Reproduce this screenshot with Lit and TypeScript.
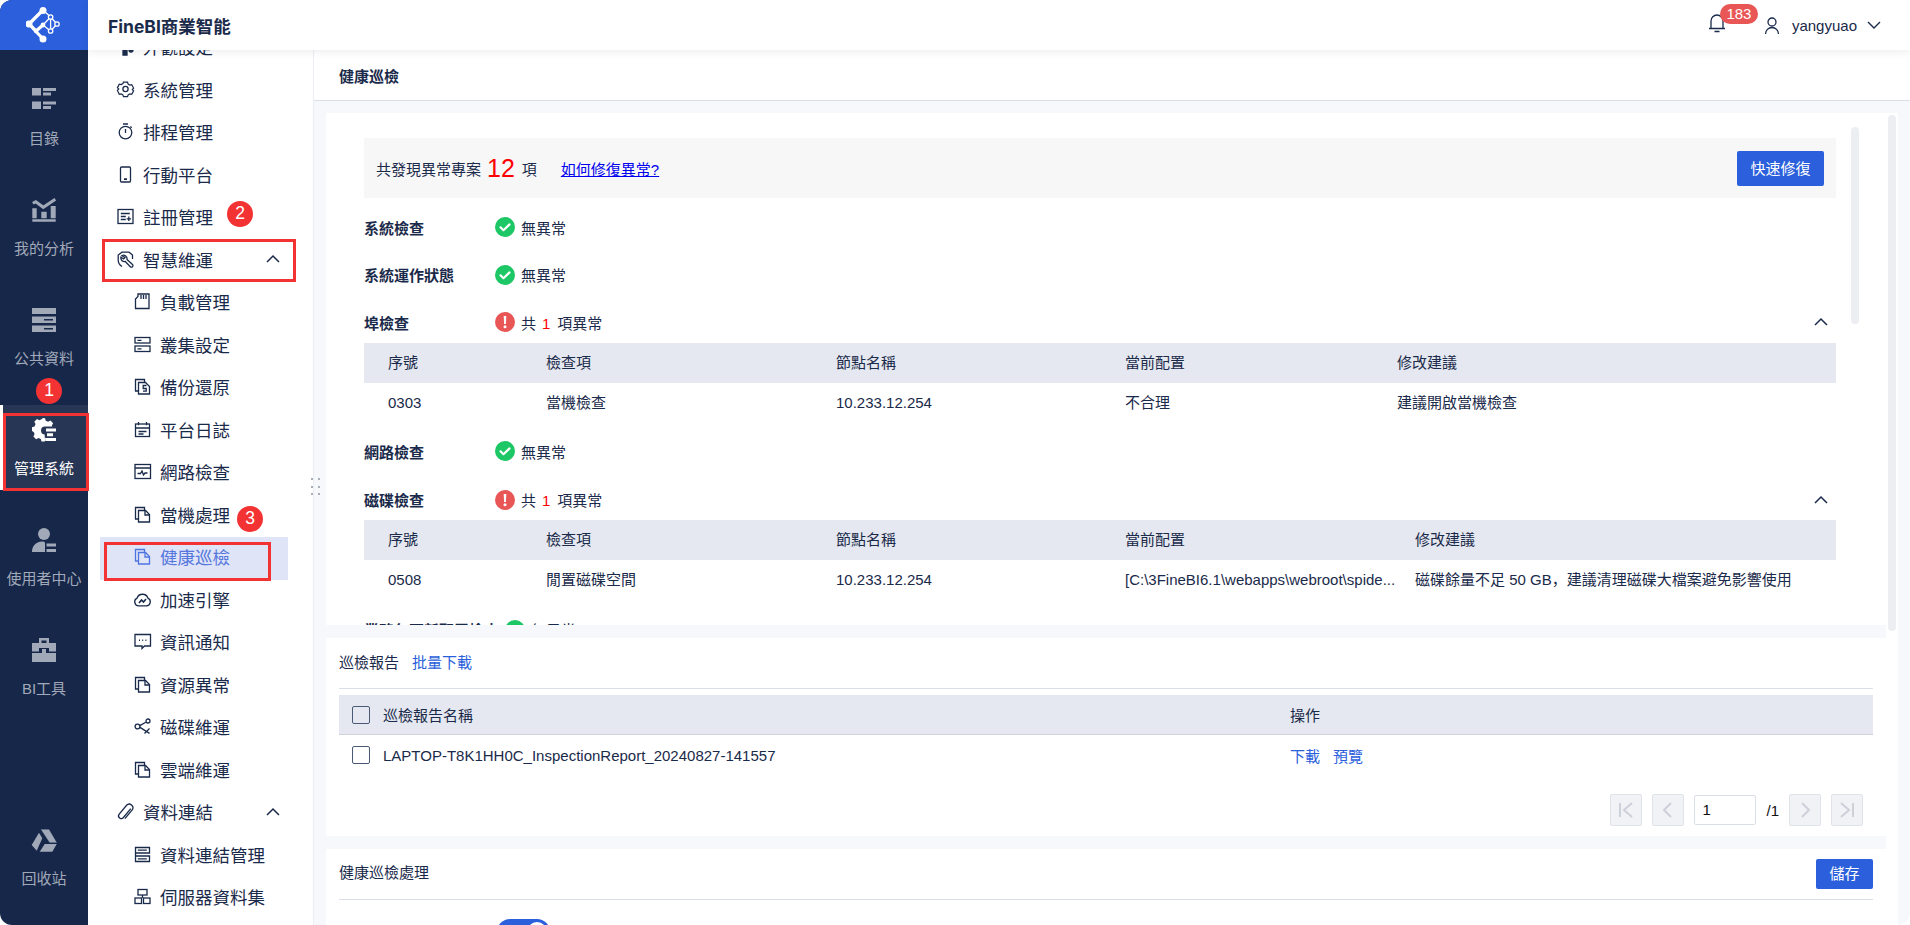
import { LitElement, html, css, svg, nothing } from "lit";
import { customElement } from "lit/decorators.js";

const navIcons: Record<string, unknown> = {
  look: svg`<path d="M6 9h4v8H6z" fill="#1a2a4a"/><circle cx="14" cy="12" r="2" fill="#1a2a4a"/>`,
  gear: svg`<path d="M6.300 1.200h4.400l.6 2 1.900 1.100 2-.5 2 3.700-1.400 1.500 1.400 1.500-2 3.700-2-.5-1.900 1.100-.6 2H6.300l-.6-2-1.900-1.100-2 .5L-.2 10l1.400-1.500L-.2 7l2-3.700 2 .5 1.900-1.100z" transform="translate(.6 .1) scale(.93)"/><circle cx="8.500" cy="8" r="2.600"/>`,
  timer: svg`<circle cx="8.500" cy="9.600" r="6.300"/><path d="M6 1h5M8.500 6v4M13.400 3.500l1.300 1.300"/>`,
  phone: svg`<rect x="3.500" y="1" width="10" height="15" rx="1"/><path d="M7 13.200h3" stroke-width="1.800"/>`,
  reg: svg`<rect x="1" y="1.500" width="15" height="14"/><path d="M3.800 5.500h9M3.800 8.500h5M3.800 11.500h5M11.800 8.500v4.500M9.600 10.800h4.500"/>`,
  wrench: svg`<path d="M5 15.500C2.500 14 1.200 12 1.200 9V4L5 1.200h7L15.500 4v4"/><path d="M5 4.500a3.600 3.600 0 0 1 5 4l5.500 5a1.500 1.500 0 0 1-2.200 2.200L8.300 10.500A3.600 3.600 0 0 1 4 6l2.500 2L8 6.500z"/>`,
  card: svg`<path d="M4 1h11v14.500H1.500V6L4 3.500z"/><path d="M7 2v4M9.500 2v4M12 2v4"/>`,
  cluster: svg`<rect x="1" y="1.500" width="15" height="5.500"/><rect x="1" y="10" width="15" height="5.500"/><path d="M3.500 4.300h4M3.500 12.800h4"/>`,
  backup: svg`<path d="M4 13H1.500V1.500h9V4"/><path d="M4.500 4.500h7l4 4v7.500h-11z"/><path d="M12.500 7.500H9.200v3h3v2.600H9"/>`,
  log: svg`<rect x="1.500" y="3" width="14" height="12.500"/><path d="M4.500 1v3.200M12.500 1v3.200M1.500 7h14M4.500 10.500h8M4.500 13h5"/>`,
  pulse: svg`<rect x="1" y="1.500" width="15.500" height="14"/><path d="M1 5h15.500M3.500 10.500h3l1.500-2.500 1.500 4 1.500-2h2.500"/>`,
  doc: svg`<path d="M4 13H1.500V1.500h9V4"/><path d="M4.500 4.500h7l4 4v7.500h-11z"/><path d="M11 4.500V9h4.500"/>`,
  cloud: svg`<path d="M4.500 14.800A4 4 0 0 1 3 7.200 5.800 5.800 0 0 1 14 7.200a4 4 0 0 1-1.500 7.600z"/><path d="M5 12l2.500-3 2 2 2.500-3" stroke-width="1.600"/>`,
  chat: svg`<path d="M1 1.500h15.500v11.500h-6l-2.500 2.500v-2.500H1z"/><path d="M5 7.200h1M8.200 7.200h1M11.400 7.200h1" stroke-width="1.600"/>`,
  nodes: svg`<circle cx="3.500" cy="8.500" r="2.400"/><circle cx="14" cy="3" r="2"/><path d="M5.800 7.600l6-3.400M6 9.400l9.500 6M15.500 10.500l-5 5"/>`,
  clip: svg`<path d="M14.800 5.400l-7.400 8.800a2.700 2.700 0 0 1-4.200-3.400L10.600 2a3.600 3.600 0 0 1 5.600 4.500l-7.300 8.800" transform="translate(-1 .3)"/>`,
  conn: svg`<path d="M1.500 1.500h14v5.500h-14zM1.500 10h14v5.500h-14zM3.800 4.200h9M3.800 12.800h9M1.500 7v3"/>`,
  server: svg`<rect x="4" y="1.500" width="9" height="5.500"/><rect x="1" y="10" width="6.500" height="5.500"/><rect x="9.500" y="10" width="6.500" height="5.500"/><path d="M8.500 7v3"/>`,
};

const railIcons: Record<string, unknown> = {
  list: svg`<rect x="0" y="0" width="9" height="7.500"/><rect x="0" y="13.500" width="9" height="7.500"/><path d="M11 0h13v3H11zM11 4.500h8v3h-8zM11 13.500h13v3H11zM11 18h8v3h-8z"/>`,
  chart: svg`<path d="M.8 5.300l3-1.600 7.500 5.600 12-8" fill="none" stroke="#a1a9b8" stroke-width="3"/><path d="M.3 10.300h4.400v10H.3zM9.300 13.700h5.400v6.600H9.300zM18.700 8h5v12.300h-5zM.3 21.300h23.400v2.400H.3z"/>`,
  data: svg`<path d="M0 0h24v6H0zM0 8.500h24v6.500H0zM0 17.500h24V24H0z"/><path d="M12 11h9v1.600h-9zM12 20h9v1.600h-9z" fill="#16274a"/>`,
  admin: svg`<path d="M11 0l2 .2.8 2.500 2.300 1 2.400-1.200 2.600 2.700-1.200 2.300.4 1H13a4 4 0 1 0 0 8h-.3v3.200h1v2.900l-1.200 1h-3l-.7-2.700-2.300-1-2.400 1.300-2.700-2.700 1.200-2.400-.9-2.200L0 13V9.200l2.600-.8.9-2.300-1.200-2.400L5 1l2.300 1.200 2.300-.9z"/><path d="M14 10.500h10v3H14zM13.500 20h10.500v3H13.500zM15 15.200h6v3h-6z"/>`,
  user: svg`<circle cx="12" cy="6" r="6"/><path d="M0 24c0-6 3.500-10 10-10.500 2 0 3 .5 3 1.500v9zM14.500 15.500H24v3h-9.500zM14.500 21H24v3h-9.500z"/>`,
  tool: svg`<path fill-rule="evenodd" d="M7 5V0h10v5h7v8.500h-7V10H7v3.500H0V5zM9.500 2.500V5h5V2.500zM0 15h7v-2h0v2h3v-4h4v4h3v0h7v9H0z"/><path d="M10 11h4v7h-4z"/>`,
  trash: svg`<path d="M8.700 1.300H17L25 14.700h-7.400z" stroke="#16274a" stroke-width=".3"/><path d="M7 4.700l3.300 5.600-5.600 12.400L-.3 17z"/><path d="M12.700 16H24.700l-4.400 7.700H7.700z"/>`,
};

const nav = [
  { t: "外觀設定", i: "look", l: 0 },
  { t: "系統管理", i: "gear", l: 0 },
  { t: "排程管理", i: "timer", l: 0 },
  { t: "行動平台", i: "phone", l: 0 },
  { t: "註冊管理", i: "reg", l: 0 },
  { t: "智慧維運", i: "wrench", l: 0, c: true },
  { t: "負載管理", i: "card", l: 1 },
  { t: "叢集設定", i: "cluster", l: 1 },
  { t: "備份還原", i: "backup", l: 1 },
  { t: "平台日誌", i: "log", l: 1 },
  { t: "網路檢查", i: "pulse", l: 1 },
  { t: "當機處理", i: "doc", l: 1 },
  { t: "健康巡檢", i: "doc", l: 1, a: true },
  { t: "加速引擎", i: "cloud", l: 1 },
  { t: "資訊通知", i: "chat", l: 1 },
  { t: "資源異常", i: "doc", l: 1 },
  { t: "磁碟維運", i: "nodes", l: 1 },
  { t: "雲端維運", i: "doc", l: 1 },
  { t: "資料連結", i: "clip", l: 0, c: true },
  { t: "資料連結管理", i: "conn", l: 1 },
  { t: "伺服器資料集", i: "server", l: 1 },
];

const rail = [
  { t: "目錄", i: "list" },
  { t: "我的分析", i: "chart" },
  { t: "公共資料", i: "data" },
  { t: "管理系統", i: "admin", a: true },
  { t: "使用者中心", i: "user" },
  { t: "BI工具", i: "tool" },
];

const chevUp = html`<svg class="chev" viewBox="0 0 14 14"><path d="M1 10l6-6 6 6" /></svg>`;

const ok = html`<svg class="st" viewBox="0 0 20 20"><circle cx="10" cy="10" r="10" fill="#1ec765"/><path d="M5.500 10.300l3 2.900 6-5.800" fill="none" stroke="#fff" stroke-width="2.200" stroke-linecap="round" stroke-linejoin="round"/></svg>`;
const warn = html`<svg class="st" viewBox="0 0 20 20"><circle cx="10" cy="10" r="10" fill="#e85656"/><path d="M8.700 4h2.600l-.4 8H9.100z" fill="#fff"/><circle cx="10" cy="14.800" r="1.500" fill="#fff"/></svg>`;

@customElement("app-root")
export class AppRoot extends LitElement {
  static styles = css`
    :host { display: block; height: 100vh; background: #fff; font-family: "Liberation Sans", "Noto Sans CJK SC", sans-serif; font-size: 15px; color: #1a2a4a; }
    .root { position: relative; height: 925px; display: grid; grid-template-columns: 88px 1fr; overflow: hidden; border-radius: 12px; }
    .rail { background: #16274a; display: flex; flex-direction: column; height: 925px; }
    .logo { height: 50px; flex: none; background: #2b5fdb; display: flex; align-items: center; justify-content: center; }
    .logo svg { width: 36px; height: 36px; }
    .items { flex: 1; display: flex; flex-direction: column; gap: 25px; padding: 25px 0; }
    .ri { height: 85px; flex: none; display: flex; flex-direction: column; align-items: center; color: #a1a9b8; padding-top: 13px; box-sizing: border-box; }
    .ri svg { width: 24px; height: 24px; fill: #a1a9b8; margin-bottom: 16.500px; overflow: visible; }
    .ri span { line-height: 20px; white-space: nowrap; }
    .ri.on { background: #283655; color: #fff; border-left: 3px solid #fff; padding-right: 3px; }
    .ri.on svg { fill: #fff; }
    .ri.bin { margin-top: auto; }
    .right { display: flex; flex-direction: column; min-width: 0; height: 925px; }
    .top { height: 50px; flex: none; background: #fff; box-shadow: 0 2px 8px rgba(30, 40, 70, 0.08); position: relative; z-index: 2; display: flex; align-items: center; justify-content: space-between; padding: 0 29px 0 20px; }
    .brand { font-family: Inter, "Noto Sans CJK SC", sans-serif; font-size: 17.500px; font-weight: 700; }
    .tools { display: flex; align-items: center; }
    .bell { position: relative; width: 56px; height: 24px; }
    .bell svg { width: 18px; height: 20px; fill: none; stroke: #1a2a4a; stroke-width: 1.300; }
    .badge { position: absolute; left: 12px; top: -9px; width: 38px; height: 20px; border-radius: 10px; background: #e85656; color: #fff; font-size: 15px; line-height: 20px; text-align: center; }
    .uicon { width: 16px; height: 17px; fill: none; stroke: #1a2a4a; stroke-width: 1.300; margin-right: 12px; }
    .uname { margin-right: 10px; }
    .down { width: 14px; height: 10px; fill: none; stroke: #1a2a4a; stroke-width: 1.400; }
    .body { flex: 1; display: flex; min-height: 0; }
    .nav { width: 226px; flex: none; box-sizing: border-box; border-right: 1px solid #eceef3; overflow: hidden; padding: 0 25px 0 12px; background: #fff; }
    .navin { margin-top: -23px; }
    .ni { height: 42.500px; box-sizing: border-box; padding-bottom: 3px; display: flex; align-items: center; font-size: 17.500px; padding-left: 17px; white-space: nowrap; }
    .ni svg.ic { width: 17px; height: 17px; flex: none; fill: none; stroke: #1a2a4a; stroke-width: 1.300; margin-right: 9px; overflow: visible; }
    .ni.sub { padding-left: 34px; }
    .ni.on { background: #dfe4f7; color: #5577dd; }
    .ni.on svg.ic { stroke: #4f74df; }
    .ni .chev { margin-left: auto; margin-right: 8px; }
    .chev { width: 14px; height: 14px; fill: none; stroke: #1a2a4a; stroke-width: 1.500; flex: none; }
    .main { flex: 1; min-width: 0; background: #f7f8fc; display: flex; flex-direction: column; position: relative; }
    .crumb { height: 50px; flex: none; background: #fff; border-bottom: 1px solid #dadee7; display: flex; align-items: center; padding-left: 25px; font-weight: 700; }
    .panel { flex: 1; min-height: 0; margin: 12px 12px 0; background: #fff; position: relative; overflow: hidden; }
    .stack { width: 1560px; background: #f7f8fc; display: flex; flex-direction: column; gap: 13px; }
    .scroll { height: 512px; background: #fff; position: relative; overflow: hidden; padding: 25px 50px 0 38px; box-sizing: border-box; }
    .sb { position: absolute; width: 8px; border-radius: 4px; background: #eceef2; }
    .sb1 { left: 1525px; top: 14px; height: 197px; }
    .sb2 { left: 1562px; top: 2px; height: 516px; }
    .sum { height: 60px; background: #f7f7f7; display: flex; align-items: center; padding: 0 12px; margin-bottom: 14px; }
    .big { color: #f00; font-size: 25px; margin: 0 7px 0 6px; }
    .sum a { color: #00e; text-decoration: underline; margin-left: 24px; }
    .btn { background: #2b5fdb; color: #fff; border-radius: 2px; text-align: center; }
    .sum .btn { margin-left: auto; width: 87px; height: 35px; line-height: 35px; }
    .row { height: 30px; display: flex; align-items: center; margin-bottom: 17.500px; }
    .row.net { margin-bottom: 18.700px; }
    .row b { width: 131px; flex: none; white-space: nowrap; }
    .row b.long { width: 141px; }
    .st { width: 20px; height: 20px; flex: none; margin-right: 6px; }
    .row i { color: #f00; font-style: normal; margin: 0 7px 0 6px; }
    .row .chev { margin-left: auto; margin-right: 8px; }
    .row.open { margin-bottom: 6px; }
    .row.open.e { margin-bottom: 5px; }
    .tb { display: grid; grid-template-columns: 158px 290px 289px 272px 463px; margin-bottom: 13px; }
    .tb.d { grid-template-columns: 158px 290px 289px 290px 445px; margin-bottom: 15px; }
    .tb div { height: 40px; line-height: 40px; padding-left: 24px; white-space: nowrap; }
    .tb .h { background: #e5e8f0; }
    .card { background: #fff; padding: 0 13px; }
    .c2 { height: 198px; }
    .ct { display: flex; align-items: center; border-bottom: 1px solid #dadee7; box-sizing: border-box; height: 51px; padding-bottom: 3px; }
    .ct a { color: #2b5fdb; margin-left: 13px; }
    .tr { height: 40px; display: flex; align-items: center; padding-left: 13px; }
    .tr.th { background: #e5e8f0; border-bottom: 1px solid #d0d3da; margin-top: 6px; box-sizing: border-box; }
    .cb { width: 18px; height: 18px; border: 1px solid #4a5a75; border-radius: 2px; box-sizing: border-box; margin-right: 13px; flex: none; }
    .tn { width: 907px; flex: none; }
    .tr a { color: #2b5fdb; margin-right: 13px; }
    .pg { display: flex; justify-content: flex-end; align-items: center; gap: 10px; padding-right: 10px; margin-top: 19px; }
    .pb { width: 32px; height: 32px; border: 1px solid #e0e3ea; border-radius: 2px; background: #f1f2f6; box-sizing: border-box; display: flex; align-items: center; justify-content: center; }
    .pb svg { width: 18px; height: 18px; fill: none; stroke: #ccd0d9; stroke-width: 2; }
    .pi { width: 62px; height: 30px; border: 1px solid #dadee7; border-radius: 2px; box-sizing: border-box; padding-left: 7px; line-height: 28px; color: #111; }
    .pt { color: #111; }
    .c3 { flex: 1; height: 110px; }
    .c3 .ct { justify-content: space-between; padding-bottom: 0; }
    .c3 .lbl { margin-top: -5px; }
    .c3 .btn { width: 57px; height: 30px; line-height: 30px; }
    .sw { width: 53px; height: 26px; border-radius: 13px; background: #2b5fdb; margin: 19px 0 0 158px; position: relative; }
    .sw::after { content: ""; position: absolute; right: 3px; top: 3px; width: 20px; height: 20px; border-radius: 50%; background: #fff; }
    .dots { position: absolute; left: -3px; top: 428px; display: grid; grid-template-columns: 2px 2px; gap: 5.500px 5px; z-index: 1; }
    .dots span { width: 2px; height: 2px; background: #a8aeba; }
    .anno { position: absolute; border: 3px solid #f33333; box-sizing: border-box; z-index: 3; }
    .a1 { left: 3px; top: 413px; width: 86px; height: 78px; }
    .a2 { left: 102px; top: 239px; width: 194px; height: 43px; }
    .a3 { left: 104px; top: 542px; width: 167px; height: 39px; }
    .num { position: absolute; width: 26px; height: 26px; border-radius: 50%; background: #f33333; color: #fff; font-size: 17.500px; line-height: 24px; text-align: center; z-index: 3; }
    .n1 { left: 36px; top: 378px; }
    .n2 { left: 227px; top: 201px; }
    .n3 { left: 237px; top: 506px; }
  `;

  private check(name: string, warnIt = false, cls = "") {
    return html`<div class="row ${warnIt ? "open" : ""} ${cls}">
      <b class="${name.length > 8 ? "long" : ""}">${name}</b>
      ${warnIt ? warn : ok}
      ${warnIt ? html`<span>共<i>1</i>項異常</span>${chevUp}` : html`<span>無異常</span>`}
    </div>`;
  }

  private table(cells: string[], cls = "") {
    const heads = ["序號", "檢查項", "節點名稱", "當前配置", "修改建議"];
    return html`<div class="tb ${cls}">
      ${heads.map((h) => html`<div class="h">${h}</div>`)}
      ${cells.map((c) => html`<div>${c}</div>`)}
    </div>`;
  }

  render() {
    return html`<div class="root">
      <aside class="rail">
        <div class="logo">
          <svg viewBox="0 0 36 36" fill="none" stroke="#fff" stroke-linecap="round">
            <path d="M3 17L17 3M3 17l14 15M3 17l7 7 7-6" stroke-width="3.200"/>
            <path d="M17 18l7.600 6L31 17l-6.400-7zM17 3l7.600 7M24.600 10v14" stroke-width="1.300"/>
            <circle cx="17" cy="3.500" r="3.500" fill="#fff" stroke="none"/><circle cx="3" cy="17" r="3.500" fill="#fff" stroke="none"/><circle cx="17" cy="32" r="3.500" fill="#fff" stroke="none"/>
            <circle cx="10" cy="24" r="2.200" fill="#fff" stroke="none"/><circle cx="17" cy="18" r="2.400" fill="#fff" stroke="none"/>
            <circle cx="24.600" cy="10" r="2.200" fill="#2b5fdb" stroke-width="1.300"/><circle cx="31" cy="17" r="2.200" fill="#2b5fdb" stroke-width="1.300"/><circle cx="24.600" cy="24" r="2.200" fill="#2b5fdb" stroke-width="1.300"/>
          </svg>
        </div>
        <div class="items">
          ${rail.map((r) => html`<div class="ri ${r.a ? "on" : ""}"><svg viewBox="0 0 24 24">${railIcons[r.i]}</svg><span>${r.t}</span></div>`)}
          <div class="ri bin"><svg viewBox="0 0 24 24">${railIcons.trash}</svg><span>回收站</span></div>
        </div>
      </aside>
      <div class="right">
        <header class="top">
          <div class="brand">FineBI商業智能</div>
          <div class="tools">
            <div class="bell">
              <svg viewBox="0 0 18 20"><path d="M1 15.500h16M3 15.500V8a6 6 0 0 1 12 0v7.500M6.500 18.500h5"/></svg>
              <span class="badge">183</span>
            </div>
            <svg class="uicon" viewBox="0 0 16 17"><circle cx="8" cy="5" r="4"/><path d="M1.500 17a6.500 6.500 0 0 1 13 0"/></svg>
            <span class="uname">yangyuao</span>
            <svg class="down" viewBox="0 0 14 10"><path d="M1 2l6 6 6-6"/></svg>
          </div>
        </header>
        <div class="body">
          <nav class="nav">
            <div class="navin">
              ${nav.map((n) => html`<div class="ni ${n.l ? "sub" : ""} ${n.a ? "on" : ""}">
                <svg class="ic" viewBox="0 0 17 17">${navIcons[n.i]}</svg>${n.t}${n.c ? chevUp : nothing}
              </div>`)}
            </div>
          </nav>
          <main class="main">
            <div class="dots">${[0, 1, 2, 3, 4, 5].map(() => html`<span></span>`)}</div>
            <div class="crumb">健康巡檢</div>
            <div class="panel">
              <div class="stack">
                <section class="scroll">
                  <div class="sum">共發現異常專案<span class="big">12</span>項<a>如何修復異常?</a><div class="btn">快速修復</div></div>
                  ${this.check("系統檢查")}
                  ${this.check("系統運作狀態")}
                  ${this.check("埠檢查", true)}
                  ${this.table(["0303", "當機檢查", "10.233.12.254", "不合理", "建議開啟當機檢查"])}
                  ${this.check("網路檢查", false, "net")}
                  ${this.check("磁碟檢查", true, "e")}
                  ${this.table(["0508", "閒置磁碟空間", "10.233.12.254", "[C:\\3FineBI6.1\\webapps\\webroot\\spide...", "磁碟餘量不足 50 GB，建議清理磁碟大檔案避免影響使用"], "d")}
                  ${this.check("業務包更新配置檢查")}
                  <div class="sb sb1"></div>
                </section>
                <section class="card c2">
                  <div class="ct">巡檢報告<a>批量下載</a></div>
                  <div class="tr th"><div class="cb"></div><div class="tn">巡檢報告名稱</div><div>操作</div></div>
                  <div class="tr"><div class="cb"></div><div class="tn">LAPTOP-T8K1HH0C_InspectionReport_20240827-141557</div><a>下載</a><a>預覽</a></div>
                  <div class="pg">
                    <div class="pb"><svg viewBox="0 0 18 18"><path d="M3 2v14M15 2L7 9l8 7"/></svg></div>
                    <div class="pb"><svg viewBox="0 0 18 18"><path d="M12 2L5 9l7 7"/></svg></div>
                    <div class="pi">1</div>
                    <div class="pt">/1</div>
                    <div class="pb"><svg viewBox="0 0 18 18"><path d="M6 2l7 7-7 7"/></svg></div>
                    <div class="pb"><svg viewBox="0 0 18 18"><path d="M3 2l8 7-8 7M15 2v14"/></svg></div>
                  </div>
                </section>
                <section class="card c3">
                  <div class="ct"><span class="lbl">健康巡檢處理</span><div class="btn">儲存</div></div>
                  <div class="sw"></div>
                </section>
              </div>
              <div class="sb sb2"></div>
            </div>
          </main>
        </div>
      </div>
      <div class="anno a1"></div>
      <div class="anno a2"></div>
      <div class="anno a3"></div>
      <div class="num n1">1</div>
      <div class="num n2">2</div>
      <div class="num n3">3</div>
    </div>`;
  }
}
